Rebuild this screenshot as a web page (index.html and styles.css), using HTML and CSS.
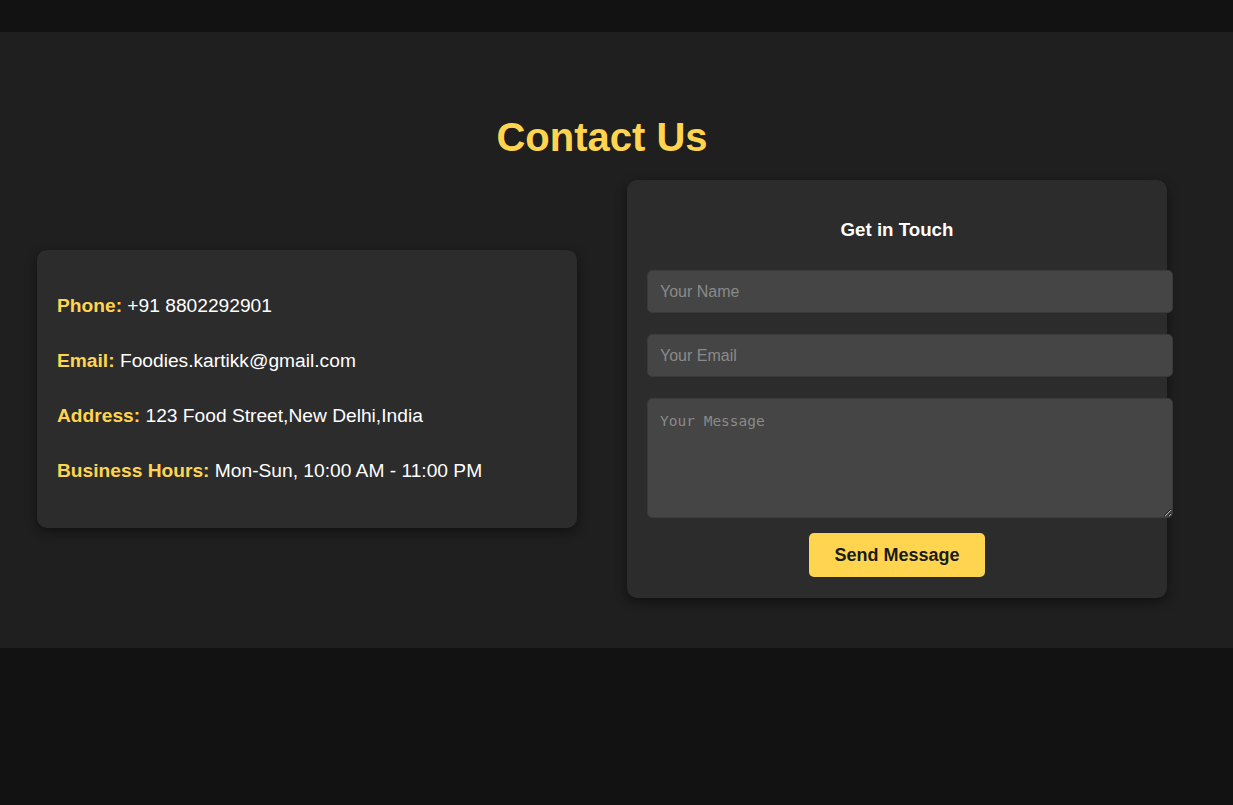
FILE: index.html
```html
<!DOCTYPE html>
<html lang="en">
<head>
<meta charset="UTF-8">
<title>Contact Us</title>
<link rel="stylesheet" href="styles.css">
</head>
<body>
<header class="topbar"></header>
<section class="contact">
  <h2 class="contact-title">Contact Us</h2>
  <div class="contact-wrap">
    <div class="card info-card">
      <p><span class="label">Phone:</span> +91 8802292901</p>
      <p><span class="label">Email:</span> Foodies.kartikk@gmail.com</p>
      <p><span class="label">Address:</span> 123 Food Street,New Delhi,India</p>
      <p><span class="label">Business Hours:</span> Mon-Sun, 10:00 AM - 11:00 PM</p>
    </div>
    <div class="card form-card">
      <h3 class="form-title">Get in Touch</h3>
      <form class="form">
        <input class="field" type="text" placeholder="Your Name">
        <input class="field" type="email" placeholder="Your Email">
        <textarea class="field area" placeholder="Your Message"></textarea>
        <button class="send" type="button">Send Message</button>
      </form>
    </div>
  </div>
</section>
</body>
</html>
```
FILE: styles.css
```css
* { box-sizing: content-box; }
html, body { margin: 0; padding: 0; }
body {
  background: #121212;
  font-family: "Liberation Sans", Arial, sans-serif;
  color: #fff;
  height: 805px;
}
.topbar { height: 32px; background: #121212; }
.contact {
  background: #1f1f1f;
  padding: 50px 66px 50px 37px;
}
.contact-title {
  margin: 32px 0 20px;
  text-align: center;
  font-size: 40px;
  line-height: 46px;
  font-weight: 700;
  color: #ffd54f;
}
.contact-wrap {
  display: flex;
  align-items: center;
  gap: 50px;
}
.card {
  width: 500px;
  background: #2c2c2c;
  border-radius: 10px;
  box-shadow: 0 4px 12px rgba(0,0,0,0.45);
  padding: 20px;
}
.info-card { padding: 20px 20px 22px; }
.info-card p {
  margin: 16px 0;
  font-size: 19.2px;
  line-height: 39px;
}
.label { color: #ffd54f; font-weight: 700; }
.form-card { padding: 20px 20px 21px; }
.form-title {
  margin: 19px 0 29px;
  text-align: center;
  font-size: 18.72px;
  line-height: 22px;
  font-weight: 700;
  color: #fff;
}
.form {
  display: flex;
  flex-direction: column;
  align-items: flex-start;
  gap: 21px;
}
.field {
  display: block;
  width: 500px;
  padding: 12px;
  height: 17px;
  border: 1px solid #3a3a3a;
  border-radius: 5px;
  background: #454545;
  color: #fff;
  font-family: "Liberation Sans", Arial, sans-serif;
  font-size: 16px;
  margin: 0;
  outline: none;
}
.field::placeholder { color: #8a8a8a; }
.area {
  padding-top: 14px;
  height: 92px;
  font-family: "DejaVu Sans Mono", monospace;
  font-size: 14.5px;
  resize: vertical;
}
.send {
  align-self: center;
  margin-top: -6px;
  background: #ffd54f;
  color: #1a1a1a;
  border: none;
  border-radius: 5px;
  padding: 12px 25px;
  font-family: "Liberation Sans", Arial, sans-serif;
  font-size: 18px;
  line-height: 20px;
  font-weight: 700;
  cursor: pointer;
}
```
